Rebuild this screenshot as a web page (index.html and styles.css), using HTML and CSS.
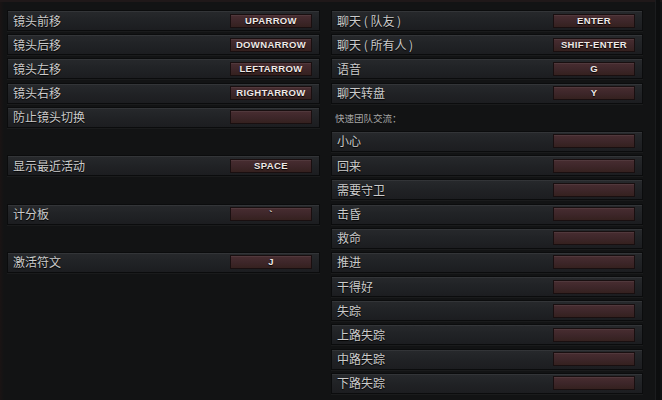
FILE: index.html
```html
<!DOCTYPE html>
<html lang="zh-CN">
<head>
<meta charset="utf-8">
<title>快捷键</title>
<link rel="stylesheet" href="styles.css">
</head>
<body>
<div class="page">
  <div class="col col-left">
    <div class="row"><span class="label">镜头前移</span><span class="key">UPARROW</span></div>
    <div class="row"><span class="label">镜头后移</span><span class="key">DOWNARROW</span></div>
    <div class="row"><span class="label">镜头左移</span><span class="key">LEFTARROW</span></div>
    <div class="row"><span class="label">镜头右移</span><span class="key">RIGHTARROW</span></div>
    <div class="row"><span class="label">防止镜头切换</span><span class="key"></span></div>
    <div class="slot"></div>
    <div class="row"><span class="label">显示最近活动</span><span class="key">SPACE</span></div>
    <div class="slot"></div>
    <div class="row"><span class="label">计分板</span><span class="key">`</span></div>
    <div class="slot"></div>
    <div class="row"><span class="label">激活符文</span><span class="key">J</span></div>
  </div>
  <div class="col col-right">
    <div class="row"><span class="label">聊天 ( 队友 )</span><span class="key">ENTER</span></div>
    <div class="row"><span class="label">聊天 ( 所有人 )</span><span class="key">SHIFT-ENTER</span></div>
    <div class="row"><span class="label">语音</span><span class="key">G</span></div>
    <div class="row"><span class="label">聊天转盘</span><span class="key">Y</span></div>
    <div class="section">快速团队交流：</div>
    <div class="row"><span class="label">小心</span><span class="key"></span></div>
    <div class="row"><span class="label">回来</span><span class="key"></span></div>
    <div class="row"><span class="label">需要守卫</span><span class="key"></span></div>
    <div class="row"><span class="label">击昏</span><span class="key"></span></div>
    <div class="row"><span class="label">救命</span><span class="key"></span></div>
    <div class="row"><span class="label">推进</span><span class="key"></span></div>
    <div class="row"><span class="label">干得好</span><span class="key"></span></div>
    <div class="row"><span class="label">失踪</span><span class="key"></span></div>
    <div class="row"><span class="label">上路失踪</span><span class="key"></span></div>
    <div class="row"><span class="label">中路失踪</span><span class="key"></span></div>
    <div class="row"><span class="label">下路失踪</span><span class="key"></span></div>
  </div>
  <div class="rail"></div>
</div>
</body>
</html>
```

FILE: styles.css
```css
html, body {
  margin: 0;
  padding: 0;
  background: #121314;
  width: 662px;
  height: 400px;
  overflow: hidden;
}

.page {
  box-sizing: border-box;
  height: 400px;
  display: flex;
  align-items: flex-start;
  padding: 10px 0 0 7px;
  gap: 11px;
  border-top: 2px solid #1f1819;
  background: linear-gradient(to right, #1a1414 0, #121314 4px, #121314 100%);
  font-family: "Noto Sans CJK SC", "Noto Sans", sans-serif;
}

.col {
  display: flex;
  flex-direction: column;
  gap: 3.2px;
}

.col-left { width: 313px; margin-top: -2px; }
.col-right { width: 312px; margin-top: -2px; }

.row {
  box-sizing: border-box;
  height: 21px;
  display: flex;
  align-items: center;
  justify-content: space-between;
  padding: 0 7px 0 5px;
  background: linear-gradient(to bottom, #27292c 0%, #212326 45%, #1c1d20 100%);
  border: 1px solid #0b0c0d;
  box-shadow: inset 0 1px 0 rgba(255,255,255,0.06), 0 1px 0 rgba(255,255,255,0.035);
}

.slot { height: 21px; }

.label {
  color: #cbcbcb;
  font-size: 12px;
  line-height: 14px;
  white-space: nowrap;
  text-shadow: 0 1px 1px #000;
}

.key {
  box-sizing: border-box;
  width: 82px;
  height: 14px;
  display: flex;
  align-items: center;
  justify-content: center;
  background: linear-gradient(to bottom, #482d31 0%, #3d2629 55%, #35211f 100%);
  border: 1px solid #190f10;
  box-shadow: inset 0 1px 0 rgba(255,255,255,0.06);
  color: #efe8e6;
  font-family: "Liberation Sans", "DejaVu Sans", sans-serif;
  font-weight: bold;
  font-size: 9.5px;
  letter-spacing: 0.35px;
  line-height: 12px;
  text-shadow: 0 1px 1px #000;
}

.section {
  height: 21px;
  display: flex;
  align-items: center;
  padding: 2px 0 0 4px;
  box-sizing: border-box;
  color: #a6a6a6;
  font-size: 9.5px;
}

.rail {
  align-self: stretch;
  width: 4px;
  margin: -12px 0 0 1px;
  background: #0d0e0f;
  border-left: 1px solid #1b1c1e;
}
```
